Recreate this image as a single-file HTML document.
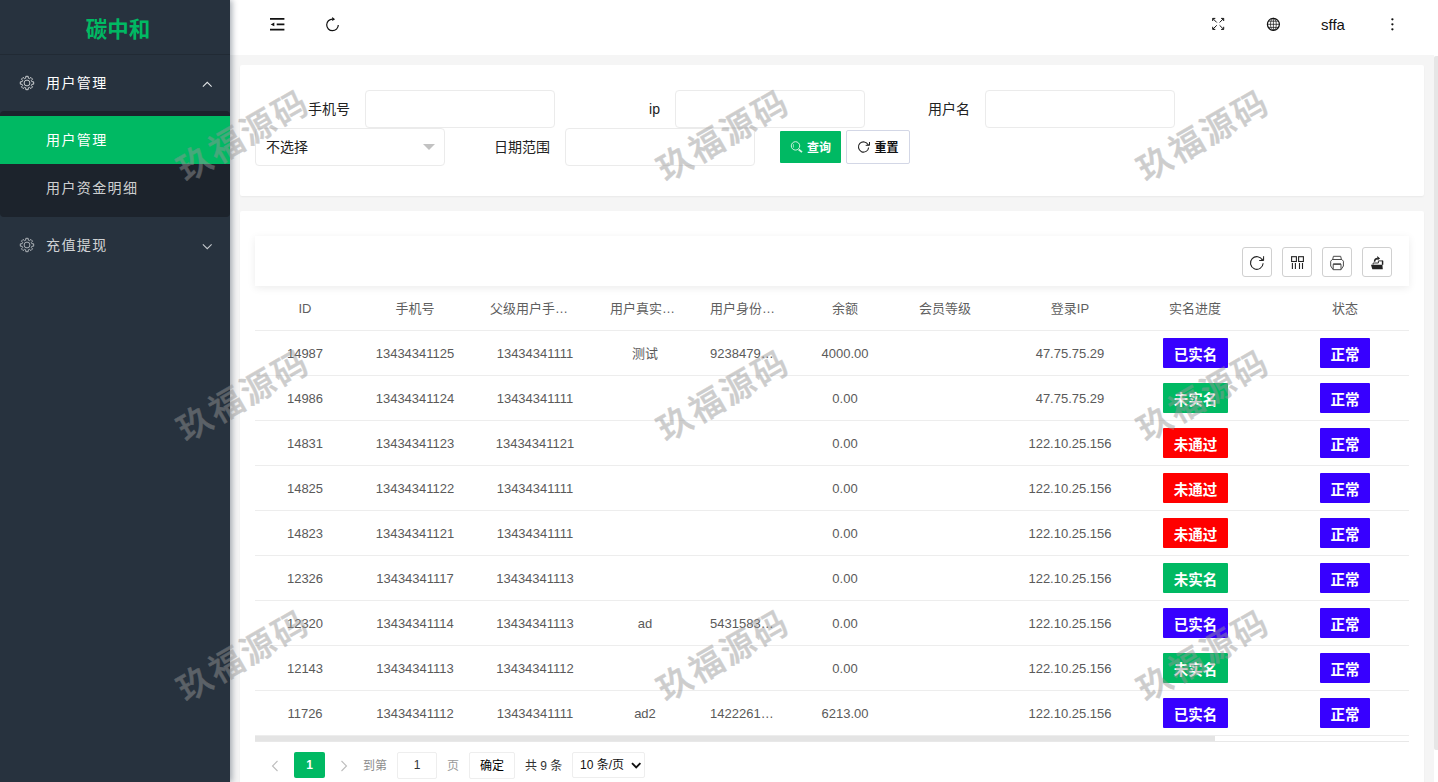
<!DOCTYPE html>
<html lang="zh-CN">
<head>
<meta charset="utf-8">
<title>碳中和</title>
<style>
*{box-sizing:border-box;margin:0;padding:0}
html,body{width:1438px;height:782px;overflow:hidden;background:#f5f5f5;
  font-family:"Liberation Sans","Noto Sans CJK SC",sans-serif;font-size:14px;color:#333}
.abs{position:absolute}
/* sidebar */
#side{position:absolute;left:0;top:0;width:230px;height:782px;background:#27323e;z-index:5;
  box-shadow:2px 0 6px rgba(0,21,41,.35)}
#logo{position:absolute;left:0;top:0;width:230px;height:55px;border-bottom:1px solid rgba(0,0,0,.15);
  text-align:center;line-height:61px;font-size:21.500px;font-weight:700;color:#00b963;letter-spacing:0px;padding-left:6px}
.nav1{position:absolute;left:0;width:230px;height:56px;line-height:56px;color:#fff;font-size:14px;letter-spacing:1.4px}
.nav1 span{position:absolute;left:46px;top:0}
.nav1 svg.gear{position:absolute;left:19px;top:19.800px}
.nav1 svg.arr{position:absolute;left:201.5px;top:26px}
#sub{position:absolute;left:0;top:111px;width:230px;height:106px;background:#1c232c;border-radius:4px}
.nav2{position:absolute;left:0;width:230px;height:48px;line-height:48px;color:rgba(255,255,255,.8);font-size:14px;letter-spacing:1.4px;padding-left:46px}
.nav2.on{background:#00b963;color:#fff}
/* header */
#head{position:absolute;left:230px;top:0;width:1208px;height:55px;background:#fff}
#head svg{position:absolute}
#user{position:absolute;left:1091px;top:0;line-height:50px;font-size:15px;color:#111;height:55px}
/* cards */
.card{position:absolute;background:#fff;border-radius:2px;box-shadow:0 1px 2px rgba(0,0,0,.05)}
.lbl{position:absolute;height:38px;line-height:38px;font-size:14px;color:#222;text-align:right;width:95px}
.inp{position:absolute;width:190px;height:38px;border:1px solid #ebebeb;border-radius:4px;background:#fff;outline:0;font:inherit;display:block}
.btn{position:absolute;font-family:inherit;text-align:left;padding:0;margin:0;display:block;height:31px;line-height:29px;font-size:12px;font-weight:bold;border-radius:2px;border:1px solid #d3d7e6;color:#111;background:#fff}
/* table */
#tool{position:absolute;left:15px;top:25px;width:1154px;height:50px;background:#fff;box-shadow:0 2px 8px rgba(0,0,0,.08)}
.tb{position:absolute;top:11px;width:30px;height:30px;border:1px solid #d0d0d0;border-radius:3px;background:#fff}
.tb svg{position:absolute;left:6px;top:6px}
#tbl{position:absolute;left:15px;top:76px;width:1154px;height:452px;overflow:hidden}
#tbl table{border-collapse:separate;border-spacing:0;table-layout:fixed;width:1190px}
#tbl th,#tbl td{padding:0;font-weight:normal;border-bottom:1px solid #ededed;position:relative}
#tbl th{height:44px;color:#5f5f5f;font-size:13px}
#tbl td{height:45px;color:#5a5a5a;font-size:13px}
.c{height:44px;line-height:45px;text-align:center;white-space:nowrap;overflow:hidden;text-overflow:ellipsis;padding:0 15px}
#tbl th .c{height:43px;line-height:43px}
.bd{position:absolute;top:7px;height:30px;line-height:34px;color:#fff;font-size:14.500px;font-weight:bold;text-align:center;border-radius:1px}
.blue{background:#3700ff}.green{background:#00b963}.red{background:#ff0000}
/* watermark */
.wm{position:absolute;z-index:50;font-size:34px;font-weight:500;color:#969696;-webkit-text-stroke:0.45px #969696;opacity:.47;white-space:nowrap;
  transform:translate(-50%,-50%) rotate(-30deg);letter-spacing:2.5px;pointer-events:none;padding-left:2.5px}
</style>
</head>
<body>
<!-- SIDEBAR -->
<div id="side">
  <div id="logo">碳中和</div>
  <div class="nav1" style="top:55px">
    <svg class="gear" width="16" height="16" viewBox="0 0 16 16" fill="none" stroke="#e6e8ea" stroke-width="0.85" stroke-linejoin="round"><circle cx="8" cy="8" r="2.900"/><path d="M6.71 3.17 L6.82 1.30 L9.18 1.30 L9.29 3.17 L10.50 3.67 L11.90 2.43 L13.57 4.10 L12.33 5.50 L12.83 6.71 L14.70 6.82 L14.70 9.18 L12.83 9.29 L12.33 10.50 L13.57 11.90 L11.90 13.57 L10.50 12.33 L9.29 12.83 L9.18 14.70 L6.82 14.70 L6.71 12.83 L5.50 12.33 L4.10 13.57 L2.43 11.90 L3.67 10.50 L3.17 9.29 L1.30 9.18 L1.30 6.82 L3.17 6.71 L3.67 5.50 L2.43 4.10 L4.10 2.43 L5.50 3.67Z"/></svg>
    <span>用户管理</span>
    <svg class="arr" width="10.5" height="7" viewBox="0 0 12 8" fill="none" stroke="#e5e7e9" stroke-width="1.2"><path d="M1 6.5l5-5 5 5"/></svg>
  </div>
  <div id="sub">
    <div class="nav2 on" style="top:5px">用户管理</div>
    <div class="nav2" style="top:53px">用户资金明细</div>
  </div>
  <div class="nav1" style="top:217px;color:rgba(255,255,255,.8)">
    <svg class="gear" width="16" height="16" viewBox="0 0 16 16" fill="none" stroke="#c3c7cb" stroke-width="0.85" stroke-linejoin="round"><circle cx="8" cy="8" r="2.900"/><path d="M6.71 3.17 L6.82 1.30 L9.18 1.30 L9.29 3.17 L10.50 3.67 L11.90 2.43 L13.57 4.10 L12.33 5.50 L12.83 6.71 L14.70 6.82 L14.70 9.18 L12.83 9.29 L12.33 10.50 L13.57 11.90 L11.90 13.57 L10.50 12.33 L9.29 12.83 L9.18 14.70 L6.82 14.70 L6.71 12.83 L5.50 12.33 L4.10 13.57 L2.43 11.90 L3.67 10.50 L3.17 9.29 L1.30 9.18 L1.30 6.82 L3.17 6.71 L3.67 5.50 L2.43 4.10 L4.10 2.43 L5.50 3.67Z"/></svg>
    <span>充值提现</span>
    <svg class="arr" width="10.5" height="7" viewBox="0 0 12 8" fill="none" stroke="#c5c9cd" stroke-width="1.2"><path d="M1 1.5l5 5 5-5"/></svg>
  </div>
</div>

<!-- HEADER -->
<div id="head">
  <svg style="left:0;top:0" width="1208" height="55" viewBox="230 0 1208 55" fill="none" stroke="#111">
    <g stroke-width="1.8"><path d="M270 18.900h14.400M276.700 24.400h7.700M270 29.700h14.400"/></g>
    <path d="M270.700 24.400l3.600-1.900v3.800z" fill="#111" stroke="none"/>
    <path d="M338.300 25A5.800 5.800 0 1 1 332.500 19.100" stroke-width="1.200"/>
    <path d="M332.200 16.900l2.900 2.300-2.900 1.900z" fill="#111" stroke="none"/>
    <g stroke-width="1"><path d="M1212.700 21v-2.600h2.600M1212.900 18.600l3.900 3.900M1221.100 18.400h2.600v2.600M1223.500 18.600l-3.900 3.900M1212.700 26.800v2.600h2.600M1212.900 29.200l3.900-3.900M1223.700 26.800v2.600h-2.600M1223.500 29.200l-3.900-3.900"/></g>
    <circle cx="1273.400" cy="24.300" r="6" stroke-width="1.200"/>
    <g stroke-width="0.700"><ellipse cx="1273.400" cy="24.300" rx="2.900" ry="6"/><path d="M1273.400 18.300v12M1267.400 24.300h12M1268.400 21.200h10M1268.400 27.400h10"/></g>
    <g fill="#111" stroke="none"><circle cx="1392.400" cy="19.300" r="1.150"/><circle cx="1392.400" cy="24.300" r="1.150"/><circle cx="1392.400" cy="29.300" r="1.150"/></g>
  </svg>
  <div id="user">sffa</div>
</div>

<!-- SEARCH CARD -->
<div class="card" style="left:240px;top:65px;width:1184px;height:131px">
  <div class="lbl" style="left:15px;top:25px">手机号</div>
  <input class="inp" type="text" style="left:125px;top:25px">
  <div class="lbl" style="left:325px;top:25px">ip</div>
  <input class="inp" type="text" style="left:435px;top:25px">
  <div class="lbl" style="left:635px;top:25px">用户名</div>
  <input class="inp" type="text" style="left:745px;top:25px">

  <div class="inp" style="left:15px;top:63px;line-height:36px;padding-left:10px;color:#222">不选择
    <svg style="position:absolute;left:167px;top:15px" width="12" height="6" viewBox="0 0 12 6"><path d="M0 0h12L6 6z" fill="#c2c2c2"/></svg>
  </div>
  <div class="lbl" style="left:215px;top:63px">日期范围</div>
  <input class="inp" type="text" style="left:325px;top:63px">
  <button type="button" class="btn" style="left:540px;top:66px;width:61px;height:32px;line-height:35.600px;border:0;border-radius:1px;background:#00b963;color:#fff;padding-left:27px">查询</button>
  <button type="button" class="btn" style="left:606px;top:65px;width:64px;height:34px;line-height:35.400px;padding-left:27.500px">重置</button>
  <svg class="abs" style="left:0;top:0" width="1184" height="131" viewBox="240 65 1184 131" fill="none">
    <circle cx="795.500" cy="145.900" r="4.200" stroke="#e8f8ee" stroke-width="0.900"/>
    <path d="M793.400 144.200v3.400" stroke="#d8f3e3" stroke-width="0.700"/>
    <path d="M798.700 149.500l3.300 2.600" stroke="#d8f3e3" stroke-width="1.800"/>
    <path d="M868.630 147.440A5.100 5.100 0 1 1 868.090 144.680" stroke="#222" stroke-width="1.100"/>
    <path d="M869.500 142v3.300h-3.800" stroke="#222" stroke-width="1"/>
    <path d="M869.500 143.200v2.100h-2.300z" fill="#222" fill-opacity="0.700"/>
  </svg>
</div>

<!-- TABLE CARD -->
<div class="card" style="left:240px;top:211px;width:1184px;height:580px">
  <div id="tool">
    <div class="tb" style="left:987px"></div>
    <div class="tb" style="left:1027px"></div>
    <div class="tb" style="left:1067px"></div>
    <div class="tb" style="left:1107px"></div>
    <svg class="abs" style="left:0;top:0" width="1154" height="50" viewBox="255 236 1154 50" fill="none" stroke="#222" stroke-width="1.100">
      <path d="M1263.140 263.290A6.350 6.350 0 1 1 1262.510 260.180"/>
      <path d="M1263.600 256.200v4.300h-4.400" stroke-width="1"/>
      <path d="M1263.600 257.800v2.700h-2.800z" fill="#222" fill-opacity="0.700" stroke="none"/>
      <g stroke-width="1.100"><rect x="1291.600" y="256.700" width="4.800" height="4.800"/><rect x="1298.600" y="256.700" width="4.800" height="4.800"/>
      <path d="M1292.400 263v6M1295.400 263v6M1299.500 263v6M1302.500 263v6"/></g>
      <g stroke="#4a4a4a" stroke-width="1" stroke-linejoin="round"><path d="M1332.700 259.500l0.700-3.200h7.300l0.700 3.200"/>
      <path d="M1332.200 259.500h9.700l1.500 1.700v4.800l-2.400 3.700h-7.800l-2.500-3.700v-4.800z"/>
      <path d="M1333.200 269.500v-5.300h7.800v5.300"/><path d="M1333.200 264.100h7.800" stroke-width="1.400"/></g>
      <path d="M1371 264.700h11.400l0.400 4.500h-10.500z" fill="#222" stroke="none"/>
      <path d="M1373.100 264.700v-1.700h5.300v-2.100h4.300v3.800" stroke-width="0.900"/>
      <path d="M1382.500 260.700v4" stroke-width="1.300"/>
      <path d="M1374.500 261.800c0-2 1-3.200 3.200-3.300" stroke-width="1.400"/>
      <path d="M1377.200 256.100l2.900 2.300-2.600 1.800z" fill="#222" stroke="none"/>
    </svg>
  </div>
  <div id="tbl">
   <table>
    <colgroup><col style="width:100px"><col style="width:120px"><col style="width:120px"><col style="width:100px"><col style="width:100px"><col style="width:100px"><col style="width:100px"><col style="width:150px"><col style="width:100px"><col style="width:200px"></colgroup>
    <thead><tr>
      <th><div class="c">ID</div></th>
      <th><div class="c">手机号</div></th>
      <th><div class="c">父级用户手机号</div></th>
      <th><div class="c">用户真实姓名</div></th>
      <th><div class="c">用户身份证号</div></th>
      <th><div class="c">余额</div></th>
      <th><div class="c">会员等级</div></th>
      <th><div class="c">登录IP</div></th>
      <th><div class="c" style="padding:0">实名进度</div></th>
      <th><div class="c">状态</div></th>
    </tr></thead>
    <tbody>
    <tr><td><div class="c">14987</div></td><td><div class="c">13434341125</div></td><td><div class="c">13434341111</div></td><td><div class="c">测试</div></td><td><div class="c">923847928374982</div></td><td><div class="c">4000.00</div></td><td><div class="c"></div></td><td><div class="c">47.75.75.29</div></td><td><div class="bd blue" style="left:18px;width:65px">已实名</div></td><td><div class="bd blue" style="left:75px;width:50px">正常</div></td></tr>
    <tr><td><div class="c">14986</div></td><td><div class="c">13434341124</div></td><td><div class="c">13434341111</div></td><td><div class="c"></div></td><td><div class="c"></div></td><td><div class="c">0.00</div></td><td><div class="c"></div></td><td><div class="c">47.75.75.29</div></td><td><div class="bd green" style="left:18px;width:65px">未实名</div></td><td><div class="bd blue" style="left:75px;width:50px">正常</div></td></tr>
    <tr><td><div class="c">14831</div></td><td><div class="c">13434341123</div></td><td><div class="c">13434341121</div></td><td><div class="c"></div></td><td><div class="c"></div></td><td><div class="c">0.00</div></td><td><div class="c"></div></td><td><div class="c">122.10.25.156</div></td><td><div class="bd red" style="left:18px;width:65px">未通过</div></td><td><div class="bd blue" style="left:75px;width:50px">正常</div></td></tr>
    <tr><td><div class="c">14825</div></td><td><div class="c">13434341122</div></td><td><div class="c">13434341111</div></td><td><div class="c"></div></td><td><div class="c"></div></td><td><div class="c">0.00</div></td><td><div class="c"></div></td><td><div class="c">122.10.25.156</div></td><td><div class="bd red" style="left:18px;width:65px">未通过</div></td><td><div class="bd blue" style="left:75px;width:50px">正常</div></td></tr>
    <tr><td><div class="c">14823</div></td><td><div class="c">13434341121</div></td><td><div class="c">13434341111</div></td><td><div class="c"></div></td><td><div class="c"></div></td><td><div class="c">0.00</div></td><td><div class="c"></div></td><td><div class="c">122.10.25.156</div></td><td><div class="bd red" style="left:18px;width:65px">未通过</div></td><td><div class="bd blue" style="left:75px;width:50px">正常</div></td></tr>
    <tr><td><div class="c">12326</div></td><td><div class="c">13434341117</div></td><td><div class="c">13434341113</div></td><td><div class="c"></div></td><td><div class="c"></div></td><td><div class="c">0.00</div></td><td><div class="c"></div></td><td><div class="c">122.10.25.156</div></td><td><div class="bd green" style="left:18px;width:65px">未实名</div></td><td><div class="bd blue" style="left:75px;width:50px">正常</div></td></tr>
    <tr><td><div class="c">12320</div></td><td><div class="c">13434341114</div></td><td><div class="c">13434341113</div></td><td><div class="c">ad</div></td><td><div class="c">543158345834588</div></td><td><div class="c">0.00</div></td><td><div class="c"></div></td><td><div class="c">122.10.25.156</div></td><td><div class="bd blue" style="left:18px;width:65px">已实名</div></td><td><div class="bd blue" style="left:75px;width:50px">正常</div></td></tr>
    <tr><td><div class="c">12143</div></td><td><div class="c">13434341113</div></td><td><div class="c">13434341112</div></td><td><div class="c"></div></td><td><div class="c"></div></td><td><div class="c">0.00</div></td><td><div class="c"></div></td><td><div class="c">122.10.25.156</div></td><td><div class="bd green" style="left:18px;width:65px">未实名</div></td><td><div class="bd blue" style="left:75px;width:50px">正常</div></td></tr>
    <tr><td><div class="c">11726</div></td><td><div class="c">13434341112</div></td><td><div class="c">13434341111</div></td><td><div class="c">ad2</div></td><td><div class="c">142226199001011</div></td><td><div class="c">6213.00</div></td><td><div class="c"></div></td><td><div class="c">122.10.25.156</div></td><td><div class="bd blue" style="left:18px;width:65px">已实名</div></td><td><div class="bd blue" style="left:75px;width:50px">正常</div></td></tr>
    </tbody>
   </table>
  </div>
  <!-- scrollbar -->
  <div class="abs" style="left:15px;top:525px;width:1154px;height:6px;background:#fff;border-bottom:1px solid #e8e8e8"></div>
  <div class="abs" style="left:15px;top:525px;width:960px;height:5px;background:#e4e4e4"></div>
  <!-- pagination -->
  <div class="abs" style="left:0;top:541px;width:600px;height:28px;font-size:12px;color:#888;line-height:28px">
    <svg class="abs" style="left:31px;top:8px" width="8" height="12" viewBox="0 0 8 12" fill="none" stroke="#bdbdbd" stroke-width="1.1"><path d="M6.500 1L1.500 6l5 5"/></svg>
    <div class="abs" style="left:54px;top:0;width:31px;height:26px;background:#00b963;color:#fff;text-align:center;line-height:26px;border-radius:2px;font-weight:bold">1</div>
    <svg class="abs" style="left:100px;top:8px" width="8" height="12" viewBox="0 0 8 12" fill="none" stroke="#bdbdbd" stroke-width="1.1"><path d="M1.500 1l5 5-5 5"/></svg>
    <div class="abs" style="left:123px;top:0;color:#8c8c8c">到第</div>
    <div class="abs" style="left:157px;top:0;width:40px;height:27px;border:1px solid #eee;border-radius:2px;text-align:center;color:#333;line-height:25px">1</div>
    <div class="abs" style="left:207px;top:0;color:#999">页</div>
    <div class="abs" style="left:229px;top:0;width:46px;height:27px;border:1px solid #eee;border-radius:2px;text-align:center;color:#000;line-height:27px;font-weight:400">确定</div>
    <div class="abs" style="left:285px;top:0;color:#333">共 9 条</div>
    <div class="abs" style="left:332px;top:0px;width:73px;height:26px;border:1px solid #eee;border-radius:2px;color:#111;line-height:25px;padding-left:7px">10 条/页
      <svg class="abs" style="left:57.500px;top:9px" width="11" height="8" viewBox="0 0 11 8" fill="none" stroke="#111" stroke-width="1.900"><path d="M1 1.200l4.200 4.300L9.400 1.200"/></svg>
    </div>
  </div>
</div>

<!-- page scrollbar -->
<div class="abs" style="left:1434px;top:55px;width:4px;height:727px;background:#fff"></div>
<div class="abs" style="left:1434px;top:56px;width:4px;height:694px;background:#e6e6e6;border-radius:2px 0 0 2px"></div>

<!-- WATERMARKS -->
<div class="wm" style="left:240.5px;top:133.5px">玖福源码</div>
<div class="wm" style="left:720.5px;top:133.5px">玖福源码</div>
<div class="wm" style="left:1200.5px;top:133.5px">玖福源码</div>
<div class="wm" style="left:240.5px;top:393.5px">玖福源码</div>
<div class="wm" style="left:720.5px;top:393.5px">玖福源码</div>
<div class="wm" style="left:1200.5px;top:393.5px">玖福源码</div>
<div class="wm" style="left:240.5px;top:653.5px">玖福源码</div>
<div class="wm" style="left:720.5px;top:653.5px">玖福源码</div>
<div class="wm" style="left:1200.5px;top:653.5px">玖福源码</div>
</body>
</html>
